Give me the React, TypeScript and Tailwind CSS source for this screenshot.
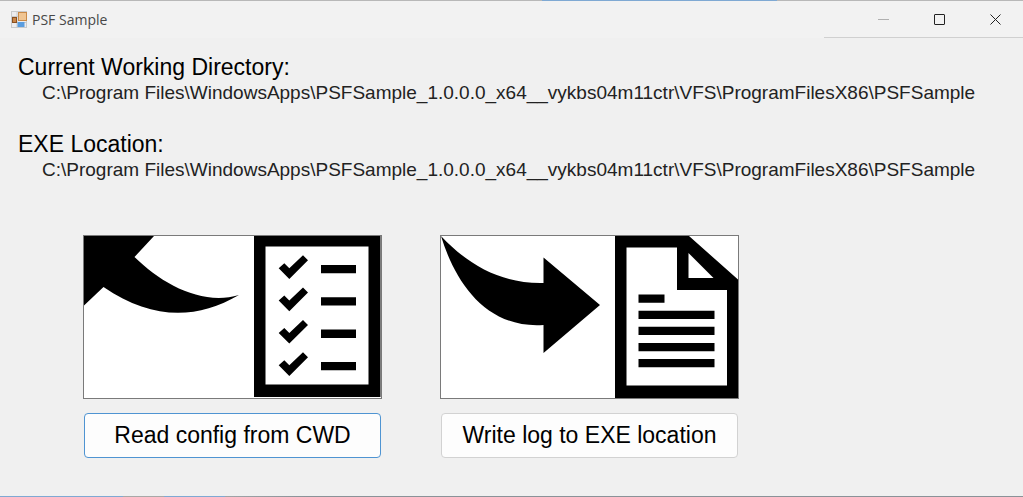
import type { ReactNode } from 'react';

const installPath =
  'C:\\Program Files\\WindowsApps\\PSFSample_1.0.0.0_x64__vykbs04m11ctr\\VFS\\ProgramFilesX86\\PSFSample';

export default function App() {
  return (
    <div className="flex min-h-screen flex-col bg-[#f0f0f0] font-['Liberation_Sans',Arial,sans-serif] text-black">
      <div className="h-px bg-[linear-gradient(to_right,#b8b8b8_53%,#7fa9d3_53%,#7fa9d3_76%,#b8b8b8_76%)]" />
      <TitleBar />
      <main className="flex grow flex-col px-[18px] pt-[15px]">
        <dl className="flex flex-col gap-[25px]">
          <PathInfo label="Current Working Directory:" path={installPath} />
          <PathInfo label="EXE Location:" path={installPath} />
        </dl>
        <div className="flex flex-wrap gap-[58px] pt-[53px] pb-4 pl-[65px]">
          <Action label="Read config from CWD" isDefault>
            <ReadPicture />
          </Action>
          <Action label="Write log to EXE location">
            <WritePicture />
          </Action>
        </div>
      </main>
      <div className="h-px bg-[linear-gradient(to_right,#7fa9d3_12%,#a8a8a8_12%,#a8a8a8_16%,#7fa9d3_16%,#7fa9d3_22%,#a0a4a8_22%,#8a9298_30%,#8a9298)]" />
    </div>
  );
}

function TitleBar() {
  return (
    <header className="flex h-[37px] items-center justify-between bg-[#f2f2f2] pl-[10px]">
      <div className="flex items-center gap-1">
        <FormIcon />
        <h1 className="font-['Open_Sans','Noto_Sans',sans-serif] text-sm text-[#484848]">
          PSF Sample
        </h1>
      </div>
      <div className="flex h-full border-b border-[#d0d0d0] pl-[31px]">
        <button
          aria-label="Minimize"
          className="flex w-14 items-center justify-center text-[#b0b0b0]"
        >
          <svg width="11" height="11" viewBox="0 0 11 11" stroke="currentColor">
            <path d="M0 5.5h11" />
          </svg>
        </button>
        <button
          aria-label="Maximize"
          className="flex w-14 items-center justify-center text-[#222]"
        >
          <svg width="11" height="11" viewBox="0 0 11 11" fill="none" stroke="currentColor">
            <rect x="0.5" y="0.5" width="10" height="10" rx="0.5" />
          </svg>
        </button>
        <button
          aria-label="Close"
          className="flex w-14 items-center justify-center text-[#222]"
        >
          <svg width="11" height="11" viewBox="0 0 11 11" stroke="currentColor">
            <path d="M0.5 0.5l10 10M10.5 0.5l-10 10" />
          </svg>
        </button>
      </div>
    </header>
  );
}

function PathInfo({ label, path }: { label: string; path: string }) {
  return (
    <div>
      <dt className="text-[23px] leading-7">{label}</dt>
      <dd className="pl-6 text-[19px] leading-6 text-[#222]">{path}</dd>
    </div>
  );
}

function Action({
  label,
  isDefault = false,
  children,
}: {
  label: string;
  isDefault?: boolean;
  children: ReactNode;
}) {
  return (
    <div className="flex flex-col gap-[14px]">
      <div className="border border-[#7a7a7a] bg-white">{children}</div>
      <button
        className={`mx-px h-[45px] rounded border bg-[#fdfdfd] text-[23px] ${
          isDefault ? 'border-[#4f94d2]' : 'border-[#d2d2d2]'
        }`}
      >
        {label}
      </button>
    </div>
  );
}

function FormIcon() {
  return (
    <svg width="18" height="18" viewBox="0 0 18 18">
      <rect x="1.5" y="0.5" width="15" height="16" fill="#ececee" stroke="#c8cacc" />
      <path d="M7 1v15M2 5.500h6M2 11.500h14" stroke="#c8cacc" />
      <rect x="8.500" y="1.500" width="8" height="8" fill="#f0c592" stroke="#c98a48" />
      <rect x="2.500" y="6.500" width="4" height="5" fill="#c98548" stroke="#8a5020" />
      <path d="M7.500 11h7v5h-7Z" fill="#5a9ddf" />
    </svg>
  );
}

const checklistRows = [0, 32.3, 64.6, 97];

function ReadPicture() {
  return (
    <svg className="block" width="297" height="162" viewBox="0 0 297 162">
      <path d="M0 0H70L50.5 21C78 48 118 70 155 59C112 84 68 84 19.5 51L0 69.500Z" />
      <path
        fillRule="evenodd"
        d="M170 0H296.500V161H170ZM181.500 10.500V148.500H284.500V10.500Z"
      />
      {checklistRows.map((y) => (
        <g key={y} transform={`translate(0 ${y})`}>
          <path d="M194.700 32.300L200.300 27.300L205.300 32.300L219 19.300L224 24.300L205.300 43Z" />
          <path d="M237 29H272V37.300H237Z" />
        </g>
      ))}
    </svg>
  );
}

function WritePicture() {
  return (
    <svg className="block" width="297" height="162" viewBox="0 0 297 162">
      <path d="M0 0C28 30 62 48 102.500 47V21.500L159 69L102.500 117V89C45 93 14 46 0 0Z" />
      <path
        fillRule="evenodd"
        d="M174 0H248L297 43.500V162H174ZM185.500 11.500V149.500H286V54H236V11.500ZM247.500 17V42H272.500Z"
      />
      <path d="M197.500 58.500h26v8.300h-26ZM197.500 74.700h76v8.300h-76ZM197.500 90.700h76v8.300h-76ZM197.500 107h76v8.300h-76ZM197.500 123h76v8.300h-76Z" />
    </svg>
  );
}
